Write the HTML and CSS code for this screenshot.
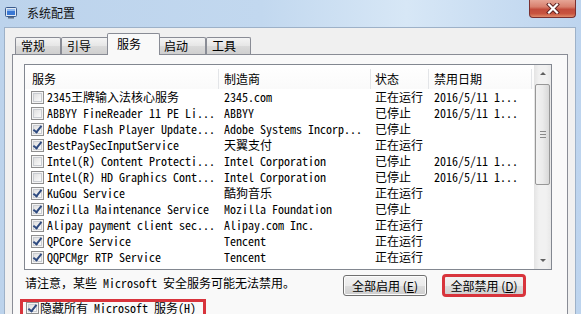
FILE: index.html
```html
<!DOCTYPE html>
<html lang="zh-CN">
<head>
  <meta charset="UTF-8" />
  <title>系统配置</title>
  <link rel="stylesheet" href="styles.css">
</head>
<body>
  <div class="window">
    <div class="titlebar">
      <svg class="app-icon" width="12" height="12" viewBox="0 0 12 12">
        <rect x="0.5" y="0.5" width="11" height="9" rx="1" fill="#dfe8f3" stroke="#3b5b8c" />
        <rect x="2" y="2" width="8" height="6" fill="#3a78d4" />
        <rect x="2" y="2" width="8" height="2" fill="#8fb8ee" />
        <rect x="3" y="10" width="6" height="1.5" fill="#5d6f88" />
      </svg>
      <span class="title">系统配置</span>
      <div class="close-btn">
        <svg width="14" height="11" viewBox="0 0 14 11">
          <path d="M3 1.5 L11 9.5 M11 1.5 L3 9.5" stroke="#5a1e1e" stroke-width="4" stroke-linecap="square" />
          <path d="M3 1.5 L11 9.5 M11 1.5 L3 9.5" stroke="#fff" stroke-width="2.2" stroke-linecap="square" />
        </svg>
      </div>
    </div>

    <div class="client">
      <div class="tabs">
        <div class="tab w46">常规</div>
        <div class="tab w48">引导</div>
        <div class="tab active">服务</div>
        <div class="tab w48">启动</div>
        <div class="tab w45">工具</div>
      </div>

      <div class="panel">
        <div class="listbox">
          <div class="list-main">
            <div class="list-head">
              <div class="col c1">服务</div>
              <div class="col c2">制造商</div>
              <div class="col c3">状态</div>
              <div class="col c4">禁用日期</div>
            </div>

            <div class="list-row">
              <div class="col c1"><span class="check"></span>2345王牌输入法核心服务</div>
              <div class="col c2">2345.com</div>
              <div class="col c3">正在运行</div>
              <div class="col c4">2016/5/11 1...</div>
            </div>
            <div class="list-row">
              <div class="col c1"><span class="check"></span>ABBYY FineReader 11 PE Li...</div>
              <div class="col c2">ABBYY</div>
              <div class="col c3">已停止</div>
              <div class="col c4">2016/5/11 1...</div>
            </div>
            <div class="list-row">
              <div class="col c1"><span class="check on"></span>Adobe Flash Player Update...</div>
              <div class="col c2">Adobe Systems Incorp...</div>
              <div class="col c3">已停止</div>
              <div class="col c4"></div>
            </div>
            <div class="list-row">
              <div class="col c1"><span class="check on"></span>BestPaySecInputService</div>
              <div class="col c2">天翼支付</div>
              <div class="col c3">正在运行</div>
              <div class="col c4"></div>
            </div>
            <div class="list-row">
              <div class="col c1"><span class="check"></span>Intel(R) Content Protecti...</div>
              <div class="col c2">Intel Corporation</div>
              <div class="col c3">已停止</div>
              <div class="col c4">2016/5/11 1...</div>
            </div>
            <div class="list-row">
              <div class="col c1"><span class="check"></span>Intel(R) HD Graphics Cont...</div>
              <div class="col c2">Intel Corporation</div>
              <div class="col c3">已停止</div>
              <div class="col c4">2016/5/11 1...</div>
            </div>
            <div class="list-row">
              <div class="col c1"><span class="check on"></span>KuGou Service</div>
              <div class="col c2">酷狗音乐</div>
              <div class="col c3">正在运行</div>
              <div class="col c4"></div>
            </div>
            <div class="list-row">
              <div class="col c1"><span class="check on"></span>Mozilla Maintenance Service</div>
              <div class="col c2">Mozilla Foundation</div>
              <div class="col c3">已停止</div>
              <div class="col c4"></div>
            </div>
            <div class="list-row">
              <div class="col c1"><span class="check on"></span>Alipay payment client sec...</div>
              <div class="col c2">Alipay.com Inc.</div>
              <div class="col c3">正在运行</div>
              <div class="col c4"></div>
            </div>
            <div class="list-row">
              <div class="col c1"><span class="check on"></span>QPCore Service</div>
              <div class="col c2">Tencent</div>
              <div class="col c3">正在运行</div>
              <div class="col c4"></div>
            </div>
            <div class="list-row">
              <div class="col c1"><span class="check on"></span>QQPCMgr RTP Service</div>
              <div class="col c2">Tencent</div>
              <div class="col c3">正在运行</div>
              <div class="col c4"></div>
            </div>
          </div>

          <div class="scrollbar">
            <div class="sb-arrow up"></div>
            <div class="sb-track">
              <div class="sb-thumb"><span class="grip"></span></div>
            </div>
            <div class="sb-arrow down"></div>
          </div>
        </div>

        <div class="actions">
          <div class="note">请注意，某些 Microsoft 安全服务可能无法禁用。</div>
          <div class="btn-group">
            <button class="btn w84">全部启用 (<u>E</u>)</button>
            <button class="btn w82 marked">全部禁用 (<u>D</u>)</button>
          </div>
        </div>

        <div class="hide-row">
          <span class="check on"></span>
          <span class="hide-label">隐藏所有 Microsoft 服务(<u>H</u>)</span>
        </div>
      </div>
    </div>
  </div>
</body>
</html>
```

FILE: styles.css
```css
body {
  margin: 0;
  width: 581px;
  height: 314px;
  overflow: hidden;
  font-family: "Noto Sans CJK SC", "Liberation Sans", sans-serif;
  font-size: 12px;
  color: #000;
}
.window {
  width: 581px;
  height: 314px;
  display: flex;
  flex-direction: column;
  overflow: hidden;
  background: linear-gradient(to right, #bcd3ec 0%, #c2d8ef 45%, #d7e7f6 70%, #c9ddf2 85%, #bdd4ee 100%);
}

/* title bar */
.titlebar {
  height: 27px;
  flex: none;
  display: flex;
  align-items: flex-start;
}
.app-icon {
  margin: 7px 0 0 5px;
}
.title {
  margin: 5px 0 0 10px;
  line-height: 16px;
  color: #111;
}
.close-btn {
  margin-left: auto;
  margin-right: 5px;
  width: 47px;
  height: 18px;
  box-sizing: border-box;
  border: 1px solid #7a3030;
  border-top: none;
  border-radius: 0 0 4px 4px;
  background: linear-gradient(to bottom, #e6a596 0%, #d8806e 40%, #c24c3c 55%, #c8543f 80%, #e08b6a 100%);
  display: flex;
  align-items: center;
  justify-content: center;
}

/* client area */
.client {
  flex: 1;
  margin: 0 5px 0 4px;
  background: #f0f0f0;
  border: 1px solid #9db1c8;
  border-bottom: none;
  padding: 5px 7px 0 7px;
  display: flex;
  flex-direction: column;
}
.tabs {
  height: 21px;
  display: flex;
  align-items: flex-end;
  padding-left: 3px;
}
.tab {
  height: 17px;
  box-sizing: border-box;
  border: 1px solid #898c95;
  border-bottom: none;
  border-radius: 2px 2px 0 0;
  background: linear-gradient(to bottom, #f4f4f4, #e6e6e6 50%, #dadada 51%, #cfcfcf);
  padding-left: 5px;
  line-height: 15px;
}
.w45 { width: 45px; }
.w46 { width: 46px; }
.w48 { width: 48px; }
.tab.active {
  position: relative;
  z-index: 1;
  width: 53px;
  height: 22px;
  margin: 0 -2px -1px;
  padding-left: 9px;
  padding-top: 2px;
  background: #f9f9f9;
}
.panel {
  flex: 1;
  border: 1px solid #898c95;
  background: #f9f9f9;
  padding: 9px 15px 0 11px;
}

/* list view */
.listbox {
  height: 206px;
  box-sizing: border-box;
  border: 1px solid #828790;
  background: #fff;
  display: flex;
}
.list-main {
  flex: 1;
  font-family: "Noto Sans Mono CJK SC", "Liberation Mono", "Noto Sans CJK SC", monospace;
}
.list-head,
.list-row {
  display: grid;
  grid-template-columns: 194px 152px 58px 103px;
}
.list-head {
  height: 24px;
  box-sizing: border-box;
  padding-top: 4px;
  background: linear-gradient(to bottom, #fff, #fafafa);
  font-family: "Noto Sans CJK SC", sans-serif;
}
.list-head .col {
  border-right: 1px solid #e3e5e8;
  line-height: 20px;
}
.list-row {
  height: 16px;
  line-height: 16px;
  white-space: nowrap;
}
.col {
  overflow: hidden;
  padding-left: 5px;
}
.list-head .c1 { padding-left: 7px; }
.list-row .c1 {
  padding-left: 6px;
  display: flex;
  align-items: center;
  gap: 3px;
}
.c3 { padding-left: 4px; font-family: "Noto Sans CJK SC", sans-serif; }

/* checkbox */
.check {
  position: relative;
  flex: none;
  width: 13px;
  height: 13px;
  box-sizing: border-box;
  border: 1px solid #8f8f8f;
  background: linear-gradient(135deg, #d8d8d8, #f6f6f6 70%, #fff);
  box-shadow: inset 0 0 0 1px #f4f4f4, inset 0 0 0 2px #c9ccd1;
}
.check.on::after {
  content: "";
  position: absolute;
  left: 3px;
  top: 0;
  width: 3px;
  height: 7px;
  border: solid #2f4b80;
  border-width: 0 2px 2px 0;
  transform: rotate(38deg);
}

/* scrollbar */
.scrollbar {
  width: 17px;
  display: flex;
  flex-direction: column;
  background: linear-gradient(to right, #e4e4e4, #f1f1f1 30%, #f1f1f1 70%, #e8e8e8);
}
.sb-arrow {
  height: 17px;
  display: flex;
  align-items: center;
  justify-content: center;
}
.sb-arrow::before {
  content: "";
  border-left: 3px solid transparent;
  border-right: 3px solid transparent;
}
.sb-arrow.up::before { border-bottom: 3px solid #606060; }
.sb-arrow.down::before { border-top: 3px solid #606060; }
.sb-track {
  flex: 1;
  padding: 2px 1px 0;
}
.sb-thumb {
  height: 101px;
  box-sizing: border-box;
  border: 1px solid #979797;
  border-radius: 2px;
  background: linear-gradient(to right, #f2f2f2, #ebebeb 50%, #d8d8d8);
  display: flex;
  align-items: center;
  justify-content: center;
}
.grip {
  width: 6px;
  height: 5px;
  border-top: 1px solid #8a8a8a;
  border-bottom: 1px solid #8a8a8a;
  background: linear-gradient(to bottom, transparent 2px, #8a8a8a 2px, #8a8a8a 3px, transparent 3px);
}

/* bottom area */
.actions {
  margin-top: 5px;
  display: flex;
  align-items: flex-start;
}
.note {
  padding-left: 1px;
  line-height: 16px;
  font-family: "Noto Sans Mono CJK SC", "Liberation Mono", "Noto Sans CJK SC", monospace;
}
.btn-group {
  margin-left: auto;
  margin-right: 27px;
  display: flex;
  gap: 16px;
}
.btn {
  height: 21px;
  padding: 0;
  border: 1px solid #707070;
  border-radius: 3px;
  background: linear-gradient(to bottom, #f2f2f2 0%, #ebebeb 50%, #dddddd 51%, #cfcfcf 100%);
  box-shadow: inset 0 0 0 1px #fcfcfc;
  font-family: "Noto Sans CJK SC", sans-serif;
  font-size: 12px;
  color: #000;
}
.w82 { width: 82px; }
.w84 { width: 84px; }
.btn.marked {
  outline: 3px solid #d8343c;
  outline-offset: -2px;
}
.hide-row {
  margin: 3px 0 0 -4px;
  width: 186px;
  height: 15px;
  box-sizing: border-box;
  border: 3px solid #d8343c;
  border-bottom: none;
  padding: 0 0 0 3px;
  display: flex;
  align-items: flex-start;
  gap: 1px;
  font-family: "Noto Sans Mono CJK SC", "Liberation Mono", "Noto Sans CJK SC", monospace;
}
.hide-row .check {
  height: 12px;
}
.hide-label {
  line-height: 12px;
  white-space: nowrap;
}
```
